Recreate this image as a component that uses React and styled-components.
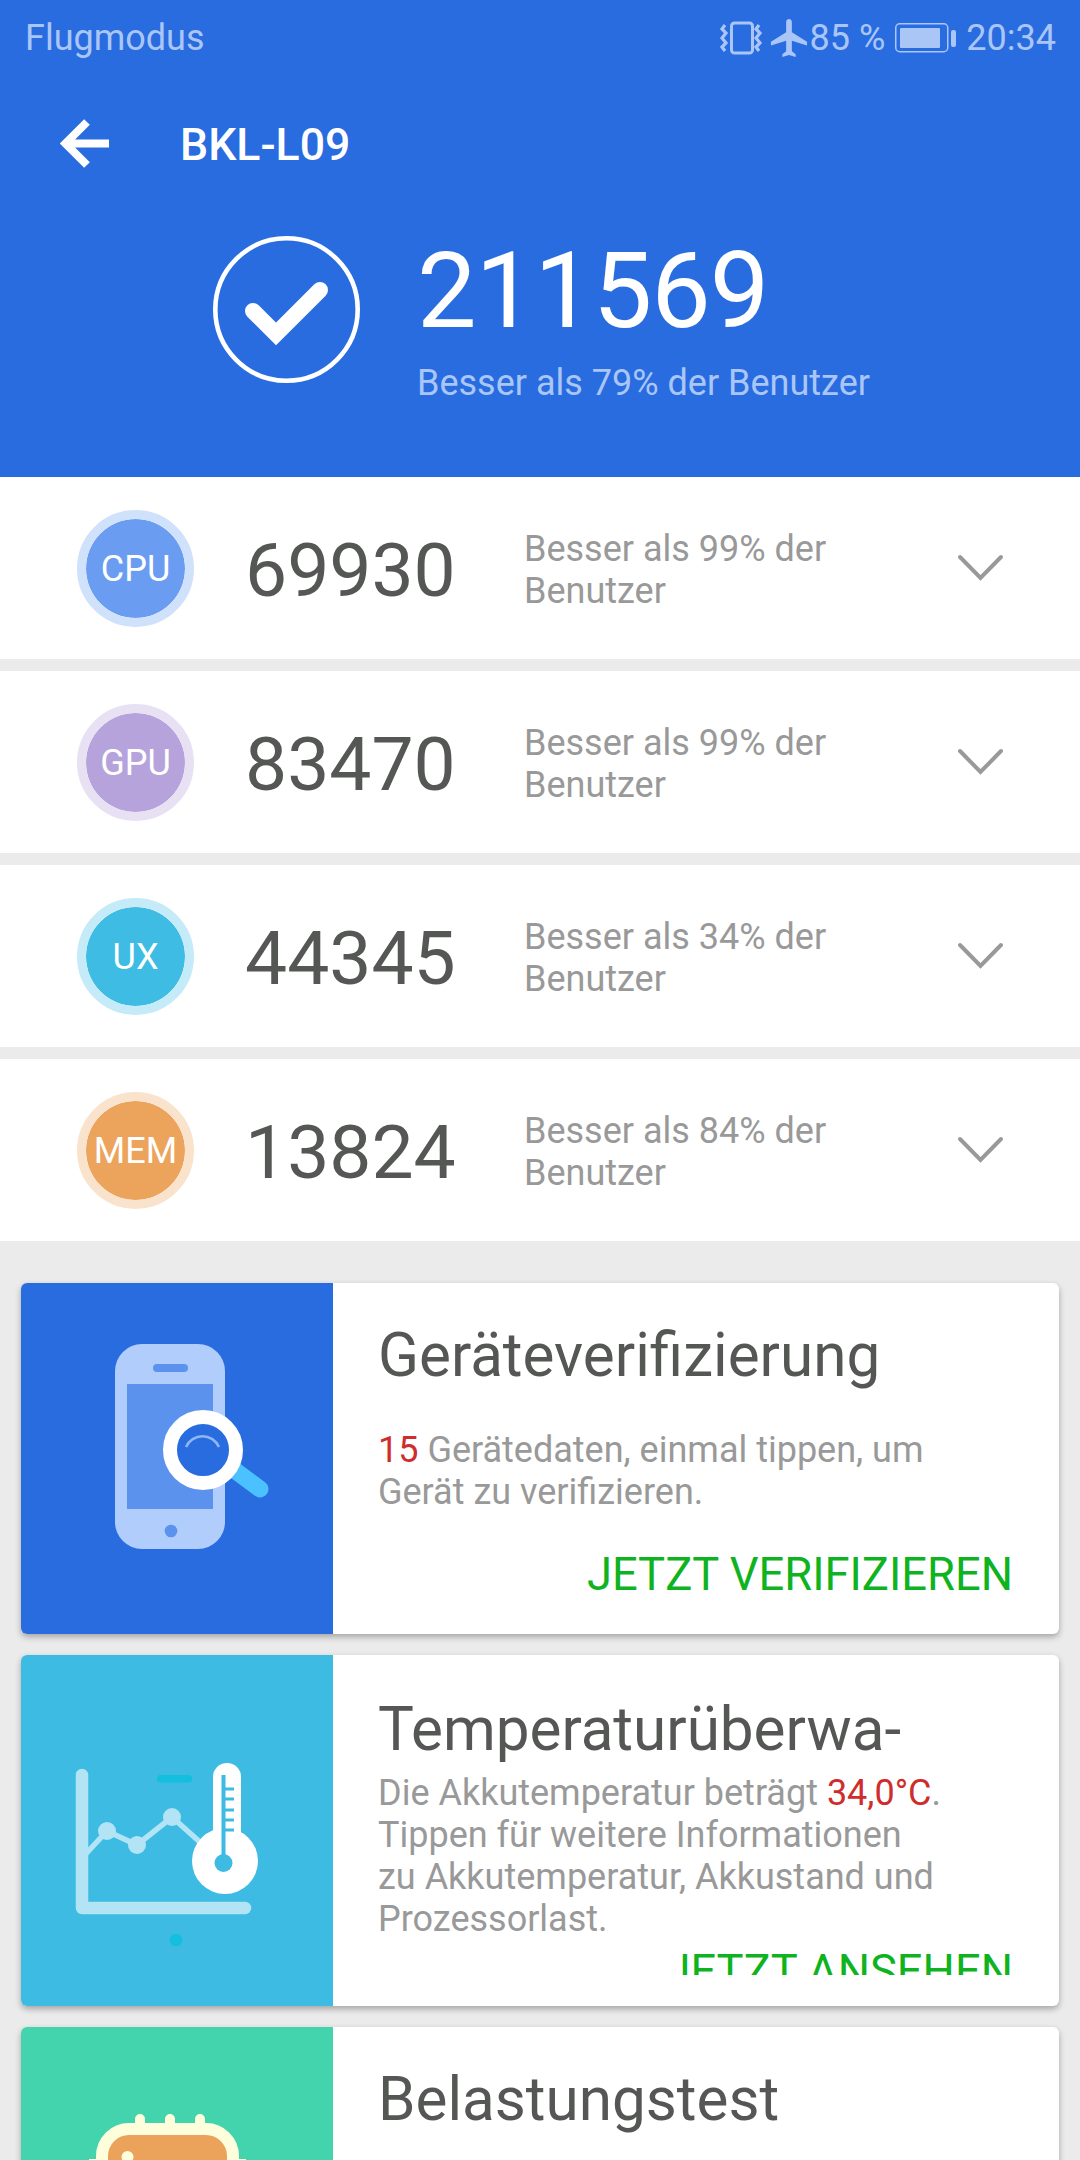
import React from "react";
import styled, { createGlobalStyle } from "styled-components";

const Global = createGlobalStyle`
  html, body { margin: 0; padding: 0; background: #ebebeb; }
  body { font-family: Roboto, "Liberation Sans", sans-serif; }
`;

const Page = styled.div`
  width: 1080px;
  height: 2160px;
  overflow: hidden;
  background: #ebebeb;
`;
const Header = styled.header`
  height: 477px;
  background: #296ce0;
  display: flex;
  flex-direction: column;
`;
const StatusBar = styled.div`
  height: 76px;
  padding: 0 24px 0 25px;
  display: flex;
  align-items: center;
  justify-content: space-between;
  color: #a9c6f7;
  font-size: 36px;
`;
const StatusRight = styled.div`
  display: flex;
  align-items: center;
`;
const StatusText = styled.span`
  margin: ${(p) => p.$margin || 0};
`;
const Toolbar = styled.div`
  height: 136px;
  padding-left: 60px;
  display: flex;
  align-items: center;
  gap: 70px;
`;
const ToolbarTitle = styled.h1`
  margin: 2px 0 0;
  color: #fff;
  font-size: 44.6px;
  font-weight: 500;
`;
const Score = styled.div`
  padding: 23px 0 0 213px;
  display: flex;
  align-items: flex-start;
  gap: 57px;
`;
const ScoreText = styled.div`
  display: flex;
  flex-direction: column;
`;
const ScoreNumber = styled.div`
  color: #fff;
  font-size: 106px;
  font-weight: 400;
  letter-spacing: -1px;
  line-height: 112px;
`;
const ScoreSub = styled.div`
  color: #a9c6f7;
  font-size: 36px;
  line-height: 42px;
  margin-top: 15px;
`;
const Rows = styled.div`
  display: flex;
  flex-direction: column;
  gap: 12px;
`;
const Row = styled.div`
  height: 182px;
  background: #fff;
  padding-left: 77px;
  display: flex;
  align-items: center;
`;
const Badge = styled.div`
  width: 117px;
  height: 117px;
  box-sizing: border-box;
  padding-top: 2px;
  border-radius: 50%;
  border: 9px solid ${(p) => p.$ring};
  background: ${(p) => p.$fill};
  background-clip: padding-box;
  color: #fff;
  font-size: 36px;
  display: flex;
  align-items: center;
  justify-content: center;
`;
const RowNumber = styled.div`
  margin: 4px 0 0 51px;
  width: 279px;
  color: #555755;
  font-size: 75px;
`;
const RowText = styled.div`
  width: 433px;
  margin-top: 3px;
  color: #999;
  font-size: 36px;
  line-height: 42px;
`;
const Cards = styled.div`
  margin-top: 42px;
  padding: 0 21px;
  display: flex;
  flex-direction: column;
  gap: 21px;
`;
const Card = styled.article`
  height: 351px;
  flex: none;
  display: flex;
  background: #fff;
  border-radius: 6px;
  overflow: hidden;
  box-shadow: 0 3px 6px rgba(0, 0, 0, 0.3);
`;
const CardArt = styled.div`
  width: 312px;
  flex: none;
  background: ${(p) => p.$bg};
  display: flex;
`;
const CardBody = styled.div`
  flex: 1;
  height: 320px;
  padding: 0 46px 0 45px;
  overflow: hidden;
  display: flex;
  flex-direction: column;
`;
const CardTitle = styled.h2`
  margin: ${(p) => p.$margin};
  color: #555755;
  font-size: 60.2px;
  font-weight: 400;
  line-height: 72px;
  flex: none;
  height: 72px;
  overflow: hidden;
`;
const CardCopy = styled.p`
  margin: 0;
  color: #999;
  font-size: 36px;
  line-height: 42px;
  flex: none;
`;
const Red = styled.span`
  color: #cf2d2d;
`;
const Action = styled.div`
  margin-top: ${(p) => p.$top}px;
  text-align: right;
  color: #0fb31f;
  font-size: 45.3px;
  line-height: 50px;
  flex: none;
`;
const Icon = styled.svg`
  display: block;
  flex: none;
`;
const CheckSvg = styled(Icon)`
  margin-top: 1px;
`;
const Chevron = styled.svg`
  display: block;
  width: 47px;
  height: 28px;
  flex: none;
`;

function VibrateIcon() {
  return (
    <Icon width="44" height="36" viewBox="0 0 44 36">
      <rect x="11.5" y="3" width="21" height="30" rx="3" fill="none" stroke="#a9c6f7" strokeWidth="3" />
      <path d="M5 5 L2 9 L6 13 L2 18 L6 23 L2 27 L5 31" fill="none" stroke="#a9c6f7" strokeWidth="3.2" />
      <path d="M39 5 L36 9 L40 13 L36 18 L40 23 L36 27 L39 31" fill="none" stroke="#a9c6f7" strokeWidth="3.2" />
    </Icon>
  );
}
function PlaneIcon() {
  return (
    <Icon width="38" height="38" viewBox="2 2 19 20">
      <path fill="#a9c6f7" d="M21 16v-2l-8-5V3.5c0-.83-.67-1.5-1.5-1.5S10 2.67 10 3.5V9l-8 5v2l8-2.5V19l-2 1.5V22l3.5-1 3.5 1v-1.5L13 19v-5.5l8 2.5z" />
    </Icon>
  );
}
function BatteryIcon() {
  return (
    <Icon width="61" height="30" viewBox="0 0 61 30">
      <rect x="0.75" y="0.75" width="52" height="28" rx="4" fill="none" stroke="#a9c6f7" strokeWidth="1.5" />
      <rect x="5" y="5" width="40" height="20" rx="1" fill="#a9c6f7" />
      <rect x="56" y="7" width="5" height="17" rx="2" fill="#a9c6f7" />
    </Icon>
  );
}
function BackIcon() {
  return (
    <Icon width="50" height="50" viewBox="0 0 50 50">
      <path d="M49 24.5 H6 M27 3 L5.5 24.5 L27 46" fill="none" stroke="#fff" strokeWidth="8" />
    </Icon>
  );
}
function CheckIcon() {
  return (
    <CheckSvg width="147" height="147" viewBox="0 0 147 147">
      <circle cx="73.5" cy="73.5" r="71.2" fill="none" stroke="#fff" strokeWidth="4.6" />
      <path d="M40 75 L63 98 L107 54" fill="none" stroke="#fff" strokeWidth="16" strokeLinecap="round" strokeLinejoin="miter" />
    </CheckSvg>
  );
}
function DownIcon() {
  return (
    <Chevron viewBox="0 0 47 28">
      <path d="M3 3 L23.5 24 L44 3" fill="none" stroke="#999" strokeWidth="4" strokeLinecap="round" />
    </Chevron>
  );
}
function PhoneArt() {
  return (
    <Icon width="312" height="351" viewBox="0 0 312 351">
      <rect x="94" y="61" width="110" height="205" rx="27" fill="#b1cdfc" />
      <rect x="106" y="101" width="86" height="125" fill="#5b92ee" />
      <rect x="132" y="81" width="35" height="8" rx="4" fill="#5b92ee" />
      <circle cx="150" cy="248" r="6.3" fill="#5b92ee" />
      <path d="M212 186 L239 206" stroke="#4bc1ff" strokeWidth="17" strokeLinecap="round" />
      <circle cx="182" cy="167" r="33" fill="#296ce0" stroke="#fff" strokeWidth="14" />
      <path d="M165 164 A18 18 0 0 1 198 164" fill="none" stroke="#8eb6f4" strokeWidth="2.5" />
    </Icon>
  );
}
function ThermoArt() {
  return (
    <Icon width="312" height="351" viewBox="0 0 312 351">
      <path d="M61 120 V253 H224" fill="none" stroke="#b2e4f5" strokeWidth="12.5" strokeLinecap="round" strokeLinejoin="round" />
      <path d="M61 203 L86 176 L116 190 L151 162 L190 197" fill="none" stroke="#b2e4f5" strokeWidth="5.5" />
      <circle cx="86" cy="176" r="9" fill="#b2e4f5" />
      <circle cx="116" cy="190" r="9" fill="#b2e4f5" />
      <circle cx="151" cy="162" r="9" fill="#b2e4f5" />
      <rect x="136" y="120" width="35" height="7.5" rx="3.5" fill="#13bede" />
      <circle cx="155" cy="285" r="6.3" fill="#13bede" />
      <rect x="192" y="108" width="28" height="100" rx="14" fill="#fff" />
      <circle cx="204" cy="206" r="33" fill="#fff" />
      <path d="M202.5 120 V205" stroke="#3ebbe3" strokeWidth="4" />
      <path d="M202 134 H213 M202 144 H213 M202 155 H213 M202 165 H213 M202 175 H213" stroke="#3ebbe3" strokeWidth="3" />
      <circle cx="202.5" cy="208" r="9" fill="#3ebbe3" />
    </Icon>
  );
}
function ChipArt() {
  return (
    <Icon width="312" height="351" viewBox="0 0 312 351">
      <path d="M119 102 V92 M149 102 V92 M179 102 V92" stroke="#fffedc" strokeWidth="10" strokeLinecap="round" />
      <path d="M68 136 H76 M217 136 H225" stroke="#fffedc" strokeWidth="8" />
      <rect x="81" y="102" width="131" height="131" rx="27" fill="#eba35c" stroke="#fffedc" strokeWidth="12" />
      <circle cx="106.5" cy="130" r="6" fill="#fffedc" />
    </Icon>
  );
}

const rows = [
  { label: "CPU", value: "69930", pct: 99, ring: "#d0e1fb", fill: "#6a9df1" },
  { label: "GPU", value: "83470", pct: 99, ring: "#e8e1f4", fill: "#b6a3dc" },
  { label: "UX", value: "44345", pct: 34, ring: "#c4ebf7", fill: "#3ebce3" },
  { label: "MEM", value: "13824", pct: 84, ring: "#fae3cd", fill: "#eca45c" },
];

export default function App() {
  return (
    <Page>
      <Global />
      <Header>
        <StatusBar>
          <span>Flugmodus</span>
          <StatusRight>
            <VibrateIcon />
            <StatusText $margin="0 2px 0 6px"><PlaneIcon /></StatusText>
            <StatusText $margin="0 10px 0 0">85 %</StatusText>
            <BatteryIcon />
            <StatusText $margin="0 0 0 10px">20:34</StatusText>
          </StatusRight>
        </StatusBar>
        <Toolbar>
          <BackIcon />
          <ToolbarTitle>BKL-L09</ToolbarTitle>
        </Toolbar>
        <Score>
          <CheckIcon />
          <ScoreText>
            <ScoreNumber>211569</ScoreNumber>
            <ScoreSub>Besser als 79% der Benutzer</ScoreSub>
          </ScoreText>
        </Score>
      </Header>
      <Rows>
        {rows.map((r) => (
          <Row key={r.label}>
            <Badge $ring={r.ring} $fill={r.fill}>{r.label}</Badge>
            <RowNumber>{r.value}</RowNumber>
            <RowText>Besser als {r.pct}% der<br />Benutzer</RowText>
            <DownIcon />
          </Row>
        ))}
      </Rows>
      <Cards>
        <Card>
          <CardArt $bg="#296ce0"><PhoneArt /></CardArt>
          <CardBody>
            <CardTitle $margin="37px 0 37px">Geräteverifizierung</CardTitle>
            <CardCopy>
              <Red>15</Red> Gerätedaten, einmal tippen, um<br />Gerät zu verifizieren.
            </CardCopy>
            <Action $top={37}>JETZT VERIFIZIEREN</Action>
          </CardBody>
        </Card>
        <Card>
          <CardArt $bg="#3ebbe3"><ThermoArt /></CardArt>
          <CardBody>
            <CardTitle $margin="39px 0 6px">Temperaturüberwa-</CardTitle>
            <CardCopy>
              Die Akkutemperatur beträgt <Red>34,0°C</Red>.<br />
              Tippen für weitere Informationen<br />
              zu Akkutemperatur, Akkustand und<br />
              Prozessorlast.
            </CardCopy>
            <Action $top={7}>JETZT ANSEHEN</Action>
          </CardBody>
        </Card>
        <Card>
          <CardArt $bg="#43d4ae"><ChipArt /></CardArt>
          <CardBody>
            <CardTitle $margin="37px 0 0">Belastungstest</CardTitle>
          </CardBody>
        </Card>
      </Cards>
    </Page>
  );
}
